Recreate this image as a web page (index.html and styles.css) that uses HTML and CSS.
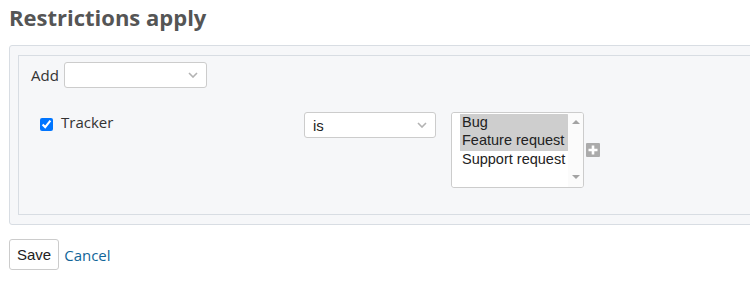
FILE: index.html
```html
<!DOCTYPE html>
<html lang="en">
<head>
    <meta charset="UTF-8">
    <meta name="viewport" content="width=device-width, initial-scale=1.0">
    <title>Restrictions apply</title>
    <link rel="stylesheet" href="styles.css">
</head>
<body>
    <div class="page">
        <h2>Restrictions apply</h2>
        <div class="box">
            <fieldset class="filters">
                <div class="add-filter">
                    <label for="add_filter_select">Add</label>
                    <select id="add_filter_select" class="select">
                        <option></option>
                        <option>Status</option>
                        <option>Priority</option>
                        <option>Assignee</option>
                    </select>
                </div>
                <div class="filter">
                    <div class="field">
                        <input type="checkbox" id="cb_tracker_id" checked>
                        <label for="cb_tracker_id">Tracker</label>
                    </div>
                    <div class="operator">
                        <select class="select select-operator">
                            <option>is</option>
                            <option>is not</option>
                        </select>
                    </div>
                    <div class="values">
                        <div class="listbox-wrap">
                            <select class="listbox" multiple size="4">
                                <option selected>Bug</option>
                                <option selected>Feature request</option>
                                <option>Support request</option>
                            </select>
                            <span class="scrollbar">
                                <span class="arrow arrow-up"></span>
                                <span class="arrow arrow-down"></span>
                            </span>
                        </div>
                        <span class="toggle-multiselect" title="Toggle multiple selection">
                            <svg width="14" height="14" viewBox="0 0 14 14">
                                <rect width="14" height="14" rx="1" fill="#ababab"/>
                                <path d="M7 2.5v9M2.5 7h9" stroke="#fff" stroke-width="2.6"/>
                            </svg>
                        </span>
                    </div>
                </div>
            </fieldset>
        </div>
        <div class="actions">
            <button type="button" class="button">Save</button>
            <a href="#" class="cancel">Cancel</a>
        </div>
    </div>
</body>
</html>
```

FILE: styles.css
```css
body {
    margin: 0;
    padding: 0;
    background: #fff;
    color: #333;
    font-family: 'Open Sans', 'Liberation Sans', sans-serif;
    font-size: 15px;
}

.page {
    padding: 3px 0 0 9px;
    overflow: hidden;
}

h2 {
    margin: 0;
    font-size: 22px;
    line-height: 29px;
    font-weight: 700;
    color: #555;
}

.box {
    width: 800px;
    margin-top: 13px;
    padding: 9px 8px;
    background-color: #f6f7f9;
    border: 1px solid #d8dde3;
    border-radius: 3px;
}

.filters {
    margin: 0;
    min-width: 0;
    padding: 6px 12px 26px;
    border: 1px solid #d8dde3;
}

.add-filter {
    display: flex;
    align-items: center;
    gap: 5px;
}

.select {
    -webkit-appearance: none;
    appearance: none;
    width: 143px;
    height: 26px;
    margin: 0;
    padding: 0 24px 0 8px;
    border: 1px solid #ccc;
    border-radius: 3px;
    background: #fff url("data:image/svg+xml,%3Csvg xmlns='http://www.w3.org/2000/svg' width='10' height='6' viewBox='0 0 10 6'%3E%3Cpath d='M1 1l4 4 4-4' fill='none' stroke='%23b3b3b3' stroke-width='1.6'/%3E%3C/svg%3E") no-repeat right 8px center;
    color: #222;
    font-family: 'Liberation Sans', Arial, sans-serif;
    font-size: 15px;
}

.select-operator {
    width: 132px;
}

.filter {
    display: flex;
    align-items: flex-start;
    margin-top: 24px;
}

.field {
    display: flex;
    align-items: flex-start;
    width: 264px;
    padding-left: 9px;
}

.field input {
    width: 13px;
    height: 13px;
    margin: 6px 8px 0 0;
}

.operator {
    width: 147px;
}

.values {
    display: flex;
    align-items: center;
    gap: 2px;
}

.listbox-wrap {
    display: flex;
    width: 131px;
    height: 74px;
    border: 1px solid #ccc;
    border-radius: 3px;
    background: #fff;
    overflow: hidden;
}

.listbox {
    -webkit-appearance: none;
    appearance: none;
    flex: 1;
    height: 100%;
    margin: 0;
    padding: 1px 0 1px 8px;
    border: none;
    outline: none;
    background: #fff;
    color: #222;
    font-family: 'Liberation Sans', Arial, sans-serif;
    font-size: 14.5px;
}

.listbox option:checked {
    background: #cecece;
    color: #222;
}

.scrollbar {
    display: flex;
    flex-direction: column;
    justify-content: space-between;
    align-items: center;
    width: 15px;
    padding: 7px 0 8px;
    background: #fbfbfb;
}

.arrow {
    width: 0;
    height: 0;
    border-left: 4.5px solid transparent;
    border-right: 4.5px solid transparent;
}

.arrow-up {
    border-bottom: 4.5px solid #a3a3a3;
}

.arrow-down {
    border-top: 4.5px solid #a3a3a3;
}

.toggle-multiselect svg {
    display: block;
    margin-top: -1px;
}

.actions {
    display: flex;
    align-items: center;
    gap: 5px;
    margin-top: 14px;
}

.button {
    height: 31px;
    padding: 0 7px;
    border: 1px solid #ccc;
    border-radius: 3px;
    background: #fff;
    color: #222;
    font-family: 'Liberation Sans', Arial, sans-serif;
    font-size: 15px;
}

.cancel {
    color: #169;
    text-decoration: none;
}
```
